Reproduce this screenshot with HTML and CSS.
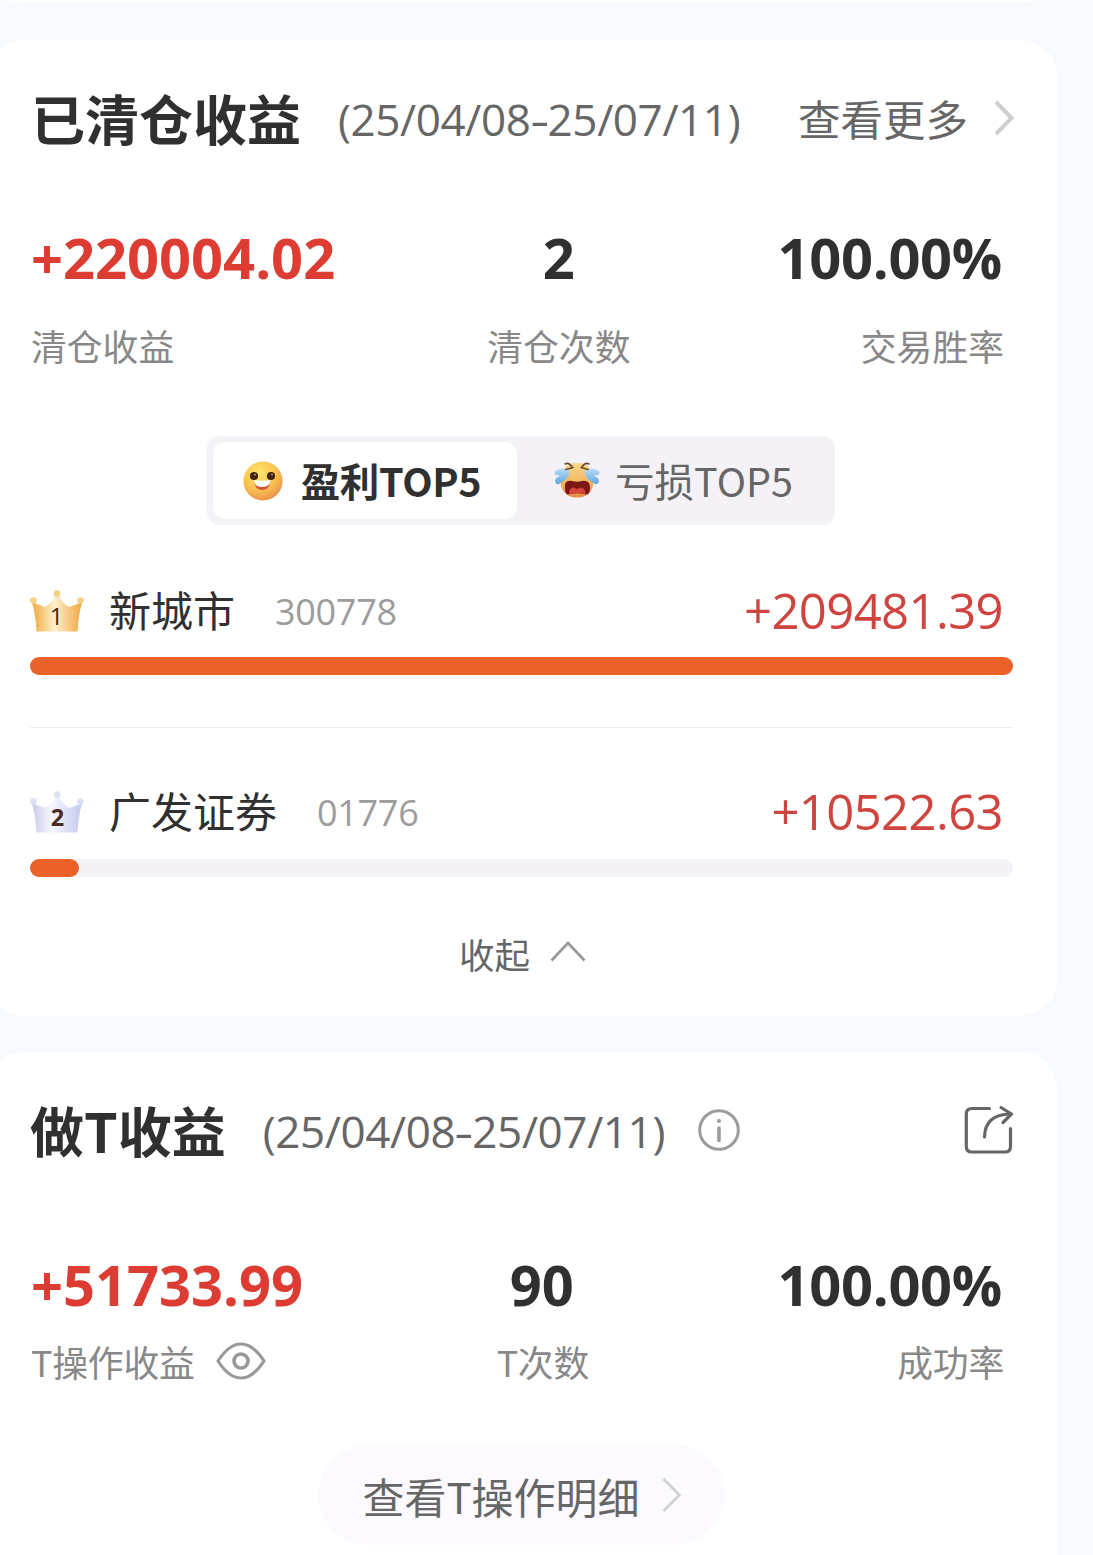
FILE: index.html
```html
<!DOCTYPE html>
<html lang="zh-CN">
<head>
<meta charset="utf-8">
<title>收益</title>
<link rel="stylesheet" href="styles.css">
</head>
<body>
<div class="page">
  <div class="card card-previous"></div>

  <section class="card card-closed">
    <header class="card-head">
      <h2 class="title">已清仓收益</h2>
      <span class="period">(25/04/08<span class="dash">-</span>25/07/11)</span>
      <a class="more">查看更多
        <svg class="more-arrow" width="22" height="38" viewBox="0 0 22 38"><path d="M3 3 L18.5 19 L3 35" fill="none" stroke="#cfcfcf" stroke-width="4"/></svg>
      </a>
    </header>

    <div class="stats">
      <div class="stat"><b class="value up">+220004.02</b><span class="label">清仓收益</span></div>
      <div class="stat mid"><b class="value">2</b><span class="label">清仓次数</span></div>
      <div class="stat end"><b class="value">100.00%</b><span class="label">交易胜率</span></div>
    </div>

    <div class="tabs">
      <div class="tab active">
        <svg class="face" width="42" height="42" viewBox="0 0 42 42">
          <defs>
            <radialGradient id="smile" cx=".4" cy=".3" r=".75"><stop offset="0" stop-color="#ffe56e"/><stop offset=".55" stop-color="#f9c44f"/><stop offset="1" stop-color="#ea8d4d"/></radialGradient>
          </defs>
          <circle cx="21" cy="21" r="19.6" fill="url(#smile)"/>
          <circle cx="12" cy="16" r="4.1" fill="#43250f"/><circle cx="29" cy="16" r="4.1" fill="#43250f"/>
          <circle cx="13" cy="14.8" r="1" fill="#b99472"/><circle cx="30" cy="14.8" r="1" fill="#b99472"/>
          <path d="M12 20.500 Q20 22 28.500 20.500 Q27.500 30 20 30 Q13 30 12 20.500Z" fill="#d0563a"/>
          <path d="M12 20 Q20 21.500 28.500 20 Q28.500 27 20 27 Q12 27 12 20Z" fill="#fff"/>
        </svg>
        <span class="tab-text">盈利TOP5</span>
      </div>
      <div class="tab tab-loss">
        <svg class="face" width="46" height="38" viewBox="0 0 46 38">
          <defs>
            <linearGradient id="cry" x1="0" y1="0" x2="0" y2="1"><stop offset="0" stop-color="#f7d98a"/><stop offset=".6" stop-color="#f1b45c"/><stop offset="1" stop-color="#e78b48"/></linearGradient>
            <linearGradient id="tear" x1="0" y1="0" x2="0" y2="1"><stop offset="0" stop-color="#b9dcf6"/><stop offset="1" stop-color="#5fa8e4"/></linearGradient>
          </defs>
          <rect x="6.500" y="2" width="33" height="34.500" rx="15.500" fill="url(#cry)"/>
          <path d="M11 27 Q10 18.500 18 20 Q23 21.500 28 20 Q36 18.500 36 27 Q36 34 32 33.500 Q23 31 14 33.500 Q11 33 11 27Z" fill="#7d1713"/>
          <path d="M15 33 Q15 26.500 19.500 26.500 L23 28 L26.500 26.500 Q31 26.500 31.500 33 Q23 31 15 33Z" fill="#d8453b"/>
          <path d="M15 9 Q9 6 3 9 Q0 10 1 13.500 Q5 15 8 14 Q1 16 1 20 Q2 24 5 23 Q10 20 13 17 Q16 13 15 9Z" fill="url(#tear)"/>
          <path d="M31 9 Q37 6 43 9 Q46 10 45 13.500 Q41 15 38 14 Q45 16 45 20 Q44 24 41 23 Q36 20 33 17 Q30 13 31 9Z" fill="url(#tear)"/>
          <path d="M11 3 Q15 1 18 6 M12 8.500 L19 6.500 M35 3 Q31 1 28 6 M34 8.500 L27 6.500" fill="none" stroke="#6b4a32" stroke-width="1.600" stroke-linecap="round"/>
        </svg>
        <span class="tab-text">亏损TOP5</span>
      </div>
    </div>

    <ul class="ranking">
      <li class="item">
        <div class="item-row">
          <svg class="crown" width="54" height="42" viewBox="0 0 54 42">
            <defs><linearGradient id="gold"><stop offset="0" stop-color="#f1b456"/><stop offset=".12" stop-color="#f3b95c"/><stop offset=".45" stop-color="#fff0cd"/><stop offset="1" stop-color="#eea53f"/></linearGradient></defs>
            <path d="M1.500 12 L15 17 Q21 14 25 6 L29 6 Q33 14 39 17 L52.500 12 Q49 20 47.500 41.500 L6.500 41.500 Q5 20 1.500 12Z" fill="url(#gold)"/>
            <circle cx="3.500" cy="10.500" r="3.300" fill="#f4cf86"/><circle cx="27" cy="3.500" r="3.300" fill="#f4cf86"/><circle cx="50.500" cy="10.500" r="3.300" fill="#f4cf86"/>
            <text class="crown-no gold-no" x="26.500" y="34.500">1</text>
          </svg>
          <span class="name">新城市</span>
          <span class="code">300778</span>
          <span class="amount">+209481.39</span>
        </div>
        <div class="bar"><div class="fill" style="width:100%"></div></div>
      </li>
      <li class="item">
        <div class="item-row">
          <svg class="crown" width="54" height="42" viewBox="0 0 54 42">
            <defs><linearGradient id="silver"><stop offset="0" stop-color="#c6cbea"/><stop offset=".4" stop-color="#f7f7ff"/><stop offset="1" stop-color="#c3c7ef"/></linearGradient></defs>
            <path d="M1.500 12 L15 17 Q21 14 25 6 L29 6 Q33 14 39 17 L52.500 12 Q49 20 47.500 41.500 L6.500 41.500 Q5 20 1.500 12Z" fill="url(#silver)"/>
            <circle cx="3.500" cy="10.500" r="3.300" fill="#dde0f3"/><circle cx="27" cy="3.500" r="3.300" fill="#dde0f3"/><circle cx="50.500" cy="10.500" r="3.300" fill="#dde0f3"/>
            <text class="crown-no silver-no" x="27.500" y="34.500">2</text>
          </svg>
          <span class="name">广发证券</span>
          <span class="code">01776</span>
          <span class="amount">+10522.63</span>
        </div>
        <div class="bar"><div class="fill" style="width:5.02%"></div></div>
      </li>
    </ul>

    <div class="collapse">收起
      <svg width="36" height="22" viewBox="0 0 36 22"><path d="M1.500 19.500 L18 2 L34.500 19.500" fill="none" stroke="#999" stroke-width="2.600"/></svg>
    </div>
  </section>

  <section class="card card-t">
    <header class="card-head">
      <h2 class="title">做T收益</h2>
      <span class="period">(25/04/08<span class="dash">-</span>25/07/11)</span>
      <svg class="info" width="42" height="42" viewBox="0 0 42 42"><circle cx="21" cy="21" r="19.300" fill="none" stroke="#9b9b9b" stroke-width="3"/><circle cx="21" cy="12" r="2" fill="#9b9b9b"/><path d="M21 19 V31.500" stroke="#9b9b9b" stroke-width="3.600" stroke-linecap="round"/></svg>
      <svg class="share" width="50" height="50" viewBox="0 0 50 50" fill="none" stroke="#666" stroke-width="3.200" stroke-linecap="round" stroke-linejoin="round"><path d="M25.500 3.500 H8 Q2.300 3.500 2.300 9 V41.500 Q2.300 47 8 47 H41 Q46.500 47 46.500 41.500 V23.500"/><path d="M20.500 32 Q21 9.500 46 9"/><path d="M37 2.500 L47.500 9 L39 17.500"/></svg>
    </header>

    <div class="stats">
      <div class="stat"><b class="value up">+51733.99</b><span class="label">T操作收益
        <svg class="eye" width="50" height="38" viewBox="0 0 50 38" fill="none" stroke="#999" stroke-width="3.200"><path d="M2 19 Q13 2 25 2 Q37 2 48 19 Q37 36 25 36 Q13 36 2 19Z" stroke-linejoin="round"/><circle cx="25" cy="19" r="7" stroke-width="3.600"/></svg></span></div>
      <div class="stat mid"><b class="value">90</b><span class="label">T次数</span></div>
      <div class="stat end"><b class="value">100.00%</b><span class="label">成功率</span></div>
    </div>

    <a class="detail">查看T操作明细
      <svg width="22" height="38" viewBox="0 0 22 38"><path d="M2.500 3 L18.500 19 L2.500 35" fill="none" stroke="#cfcfd2" stroke-width="2.600"/></svg>
    </a>
  </section>
</div>
</body>
</html>
```
FILE: styles.css
```css
* { box-sizing: border-box; }

body {
  margin: 0;
  background: #f6faff;
  font-family: "Noto Sans CJK SC", sans-serif;
  color: #303030;
}

svg { display: block; flex: none; }

.page {
  height: 1555px;
  overflow: hidden;
}

.card {
  width: 1069px;
  margin-left: -12px;
  padding: 0 44px 0 42px;
  background: #fff;
  border-radius: 36px;
}

.card-previous {
  height: 100px;
  margin-top: -97px;
}

.card-closed {
  height: 976px;
  margin-top: 37px;
  padding-top: 48px;
}

.card-t {
  height: 560px;
  margin-top: 36px;
  padding-top: 48px;
}

.card-head {
  display: flex;
  align-items: center;
  height: 60px;
  white-space: nowrap;
}

.title {
  margin: 0 0 0 1px;
  font-size: 54px;
  line-height: 60px;
  font-weight: 700;
}

.card-t .title { margin-left: 0; }

.period {
  margin-left: 37px;
  padding-top: 1px;
  font: 400 44px/60px "Open Sans", sans-serif;
  letter-spacing: -.4px;
  color: #666;
}

.dash {
  display: inline-block;
  width: 17px;
  transform: scaleX(1.35);
  text-align: center;
}

.more {
  display: flex;
  align-items: center;
  gap: 25px;
  margin-left: auto;
  margin-right: -2px;
  font-size: 42.5px;
  line-height: 60px;
  color: #666;
}

.info { margin-left: 33px; }

.share {
  margin-left: auto;
  margin-right: -1px;
}

.stats {
  display: flex;
  justify-content: space-between;
  margin-top: 77px;
  padding: 0 9px 0 1px;
}

.stat {
  display: flex;
  flex-direction: column;
  gap: 34px;
}

.card-t .stats { margin-top: 92px; }
.card-t .stat { gap: 23px; }

.mid {
  align-items: center;
  margin-left: 5px;
}

.end { align-items: flex-end; }

.end .value {
  margin-right: 2px;
  letter-spacing: -.3px;
}

.card-t .mid .value { margin-right: 2px; }

.value {
  font: 700 56px/64px "Open Sans", sans-serif;
}

.up { color: #dd3c33; }

.label {
  display: flex;
  align-items: center;
  gap: 21px;
  height: 44px;
  font-size: 35.8px;
  line-height: 44px;
  color: #888;
}

.eye { margin-right: -30px; }

.card-t .label { letter-spacing: -.2px; }

.tabs {
  display: flex;
  width: 628px;
  height: 89px;
  margin: 69px 0 0 177px;
  padding: 6px;
  border-radius: 12px;
  background: #f4f2f6;
}

.tab {
  display: flex;
  align-items: center;
  justify-content: center;
  gap: 17px;
  width: 304px;
  padding-right: 7px;
  font-size: 39.5px;
  line-height: 75px;
  color: #666;
}

.tab-text { margin-top: -2px; }

.active {
  border-radius: 12px;
  background: #fff;
  font-weight: 700;
  letter-spacing: -.3px;
  color: #303030;
}

.tab-loss {
  gap: 15px;
  padding: 0 0 0 9px;
}

.face { margin-top: 1px; }
.tab-loss .face { margin-top: -1px; }

.ranking {
  margin: 59px 0 0;
  padding: 0;
  list-style: none;
}

.item + .item {
  margin-top: 52px;
  padding-top: 57px;
  border-top: 1px solid #eee;
}

.item-row {
  display: flex;
  align-items: center;
  height: 50px;
  white-space: nowrap;
}

.crown { margin-top: 3px; }

.crown-no {
  text-anchor: middle;
  font-family: "Open Sans", sans-serif;
  font-size: 23.5px;
}

.gold-no { fill: #3a2418; font-weight: 500; }
.silver-no { fill: #4a2a22; font-weight: 700; }

.name {
  margin-left: 25px;
  font-size: 42px;
  line-height: 50px;
}

.code {
  margin-left: 40px;
  padding-top: 5px;
  font: 400 36px/50px "Open Sans", sans-serif;
  letter-spacing: -.3px;
  color: #9c9c9c;
}

.amount {
  margin-left: auto;
  padding: 2px 10px 0 0;
  font: 400 49px/50px "Open Sans", sans-serif;
  letter-spacing: -.6px;
  color: #cf443e;
}

.bar {
  height: 18px;
  margin-top: 23px;
  border-radius: 9px;
  background: #f4f2f6;
}

.item + .item .bar { margin-top: 24px; }

.fill {
  height: 100%;
  border-radius: 9px;
  background: #eb612a;
}

.collapse {
  display: flex;
  align-items: center;
  justify-content: center;
  gap: 20px;
  height: 44px;
  margin-top: 55px;
  padding-left: 2px;
  font-size: 35.5px;
  line-height: 44px;
  color: #666;
}

.collapse svg { margin-top: -4px; }

.detail {
  display: flex;
  align-items: center;
  justify-content: center;
  gap: 21px;
  width: 407px;
  height: 100px;
  margin: 62px auto 0;
  padding-left: 2px;
  border-radius: 50px;
  background: #fcfaff;
  font-size: 42px;
  color: #666;
}
```
